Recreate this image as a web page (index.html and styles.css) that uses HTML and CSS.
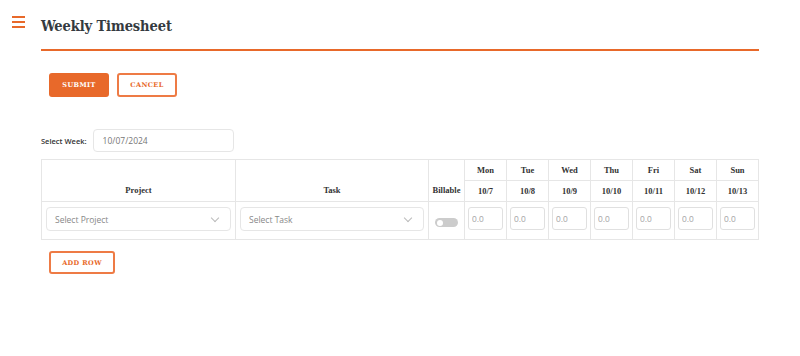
FILE: index.html
```html
<!DOCTYPE html>
<html lang="en">
<head>
  <meta charset="UTF-8">
  <meta name="viewport" content="width=device-width, initial-scale=1.0">
  <title>Weekly Timesheet</title>
  <link rel="stylesheet" href="styles.css">
</head>
<body>
  <div class="menu-toggle">
    <svg width="13" height="12" viewBox="0 0 13 12">
      <rect x="0" y="0" width="13" height="2" fill="#e8692a"/>
      <rect x="0" y="5" width="13" height="2" fill="#e8692a"/>
      <rect x="0" y="10" width="13" height="2" fill="#e8692a"/>
    </svg>
  </div>
  <div class="page">
    <div class="header">
      <h1>Weekly Timesheet</h1>
    </div>
    <div class="actions">
      <button class="btn btn-primary">Submit</button>
      <button class="btn btn-outline">Cancel</button>
    </div>
    <div class="week-picker">
      <label>Select Week:</label>
      <input type="text" value="10/07/2024">
    </div>
    <table class="timesheet">
      <thead>
        <tr>
          <th rowspan="2" class="col-project">Project</th>
          <th rowspan="2" class="col-task">Task</th>
          <th rowspan="2" class="col-billable">Billable</th>
          <th>Mon</th><th>Tue</th><th>Wed</th><th>Thu</th><th>Fri</th><th>Sat</th><th>Sun</th>
        </tr>
        <tr>
          <th>10/7</th><th>10/8</th><th>10/9</th><th>10/10</th><th>10/11</th><th>10/12</th><th>10/13</th>
        </tr>
      </thead>
      <tbody>
        <tr>
          <td><div class="select">Select Project<span class="chev"></span></div></td>
          <td><div class="select">Select Task<span class="chev"></span></div></td>
          <td class="center"><span class="switch"></span></td>
          <td><input class="hours" type="text" placeholder="0.0"></td>
          <td><input class="hours" type="text" placeholder="0.0"></td>
          <td><input class="hours" type="text" placeholder="0.0"></td>
          <td><input class="hours" type="text" placeholder="0.0"></td>
          <td><input class="hours" type="text" placeholder="0.0"></td>
          <td><input class="hours" type="text" placeholder="0.0"></td>
          <td><input class="hours" type="text" placeholder="0.0"></td>
        </tr>
      </tbody>
    </table>
    <div class="actions add">
      <button class="btn btn-outline">Add Row</button>
    </div>
  </div>
</body>
</html>
```

FILE: styles.css
```css
body {
  margin: 0;
  font-family: 'Open Sans', sans-serif;
  background-color: #fff;
  color: #343a40;
}
.menu-toggle {
  position: absolute;
  left: 12px;
  top: 16px;
  line-height: 0;
}
.page {
  padding: 0 41px;
}
.header {
  border-bottom: 2px solid #e8692a;
  padding-top: 17px;
  box-sizing: border-box;
  height: 51px;
}
.header h1 {
  margin: 0;
  font-family: 'DejaVu Serif Condensed', 'DejaVu Serif', serif;
  font-stretch: condensed;
  font-size: 14.5px;
  font-weight: bold;
  color: #343a40;
  letter-spacing: -0.1px;
}
.actions {
  display: flex;
  gap: 8px;
  padding: 22px 0 0 8px;
}
.btn {
  font-family: 'DejaVu Serif', serif;
  font-size: 6.5px;
  font-weight: bold;
  text-transform: uppercase;
  letter-spacing: 0.4px;
  white-space: nowrap;
  height: 24px;
  border-radius: 3px;
  padding: 0;
  box-sizing: border-box;
  cursor: pointer;
}
.btn-primary {
  background-color: #e8692a;
  border: 2px solid #e8692a;
  color: #fff;
  width: 60px;
}
.btn-outline {
  background-color: #fff;
  border: 2px solid #ee7b45;
  color: #e8692a;
  width: 60px;
}
.week-picker {
  display: flex;
  align-items: center;
  gap: 6px;
  margin-top: 32px;
}
.week-picker label {
  font-size: 7.5px;
  font-weight: 600;
  color: #333;
}
.week-picker input {
  width: 141px;
  height: 23px;
  box-sizing: border-box;
  border: 1px solid #e6e6e6;
  border-radius: 4px;
  padding: 0 9px;
  font-family: 'Open Sans', sans-serif;
  font-size: 8.5px;
  color: #777;
}
.timesheet {
  margin-top: 7px;
  width: 718px;
  border-collapse: collapse;
  table-layout: fixed;
}
.timesheet th, .timesheet td {
  border: 1px solid #e6e6e6;
}
.timesheet th {
  font-family: 'Liberation Serif', serif;
  font-size: 8.5px;
  font-weight: bold;
  color: #333;
  height: 20px;
  padding: 0;
  vertical-align: middle;
}
.timesheet th[rowspan] {
  vertical-align: bottom;
  padding-bottom: 6px;
}
.col-project { width: 193px; }
.col-task { width: 192px; }
.col-billable { width: 35px; }
.timesheet tbody tr {
  height: 38px;
}
.timesheet td {
  padding: 5px 3px 0;
  vertical-align: top;
}
.timesheet td:first-child, .timesheet td:nth-child(2) {
  padding: 5px 4px 0;
}
.select {
  display: flex;
  align-items: center;
  justify-content: space-between;
  height: 22px;
  border: 1px solid #e6e6e6;
  border-radius: 4px;
  padding: 0 8px;
  font-size: 8.5px;
  color: #888;
}
.chev {
  width: 5px;
  height: 5px;
  border-right: 1px solid #bbb;
  border-bottom: 1px solid #bbb;
  transform: rotate(45deg);
  margin: 0 4px 3px 0;
}
.timesheet td.center {
  text-align: center;
  padding-top: 16px;
  line-height: 0;
}
.switch {
  display: inline-block;
  position: relative;
  width: 23px;
  height: 9px;
  border-radius: 5px;
  background-color: #ccc;
}
.switch::after {
  content: "";
  position: absolute;
  left: 2px;
  top: 1.5px;
  width: 6px;
  height: 6px;
  border-radius: 50%;
  background-color: #fff;
}
.hours {
  display: block;
  width: 100%;
  height: 23px;
  box-sizing: border-box;
  border: 1px solid #e0e0e0;
  border-radius: 3px;
  padding: 0 3px;
  font-family: 'Liberation Sans', sans-serif;
  font-size: 8.5px;
}
.hours::placeholder {
  color: #aaa;
}
.add {
  padding-top: 11px;
}
.add .btn {
  width: 66px;
  height: 23px;
}
```
